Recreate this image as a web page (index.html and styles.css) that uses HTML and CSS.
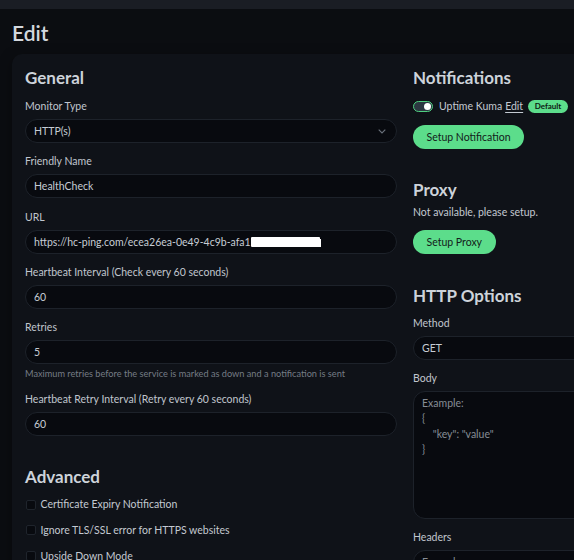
FILE: index.html
```html
<!DOCTYPE html>
<html lang="en">
<head>
<meta charset="utf-8">
<title>Edit</title>
<link rel="stylesheet" href="styles.css">
</head>
<body>
<div class="topbar"></div>
<main class="page">
  <h1 class="page-title">Edit</h1>
  <div class="card">
    <div class="col col-left">
      <h2 class="section-title">General</h2>

      <div class="field">
        <label class="label">Monitor Type</label>
        <div class="select">
          <span>HTTP(s)</span>
          <svg class="chevron" width="8" height="5" viewBox="0 0 8 5"><path d="M0.7 0.7 L4 4 L7.3 0.7" fill="none" stroke="#6b727c" stroke-width="1.1"/></svg>
        </div>
      </div>

      <div class="field">
        <label class="label">Friendly Name</label>
        <div class="input">HealthCheck</div>
      </div>

      <div class="field">
        <label class="label">URL</label>
        <div class="input input-url"><span>https://hc-ping.com/ecea26ea-0e49-4c9b-afa1</span><span class="redact"></span></div>
      </div>

      <div class="field">
        <label class="label">Heartbeat Interval (Check every 60 seconds)</label>
        <div class="input">60</div>
      </div>

      <div class="field field-help">
        <label class="label">Retries</label>
        <div class="input">5</div>
        <div class="help">Maximum retries before the service is marked as down and a notification is sent</div>
      </div>

      <div class="field">
        <label class="label">Heartbeat Retry Interval (Retry every 60 seconds)</label>
        <div class="input">60</div>
      </div>

      <h2 class="section-title advanced">Advanced</h2>
      <div class="check"><span class="box"></span><span>Certificate Expiry Notification</span></div>
      <div class="check"><span class="box"></span><span>Ignore TLS/SSL error for HTTPS websites</span></div>
      <div class="check"><span class="box"></span><span>Upside Down Mode</span></div>
    </div>

    <div class="col col-right">
      <h2 class="section-title">Notifications</h2>
      <div class="notif-row">
        <span class="switch"><span class="knob"></span></span>
        <span class="notif-name">Uptime Kuma</span>
        <a class="notif-edit">Edit</a>
        <span class="badge">Default</span>
      </div>
      <button class="btn btn-notif">Setup Notification</button>

      <h2 class="section-title proxy">Proxy</h2>
      <p class="note">Not available, please setup.</p>
      <button class="btn btn-proxy">Setup Proxy</button>

      <h2 class="section-title http">HTTP Options</h2>
      <div class="field">
        <label class="label">Method</label>
        <div class="select"><span>GET</span></div>
      </div>
      <div class="field">
        <label class="label">Body</label>
        <div class="textarea"><span class="ph">Example:
{
    "key": "value"
}</span></div>
      </div>
      <div class="field">
        <label class="label">Headers</label>
        <div class="textarea"><span class="ph">Example:</span></div>
      </div>
    </div>
  </div>
</main>
</body>
</html>
```

FILE: styles.css
```css
* { box-sizing: border-box; }

html, body {
  margin: 0;
  padding: 0;
  background: #0b0d11;
  overflow: hidden;
}

body {
  font-family: Lato, "Noto Sans", sans-serif;
  color: #c3c9d1;
  font-size: 10.5px;
  width: 574px;
  height: 560px;
}

.topbar {
  height: 9px;
  background: #1a1d24;
}

.page {
  padding: 0 12px;
}

.page-title {
  margin: 11px 0 8px 0;
  font-size: 21px;
  line-height: 26px;
  font-weight: 600;
  color: #d3d8de;
}

.card {
  display: flex;
  gap: 16px;
  width: 786px;
  background: #0f1218;
  border-radius: 10px;
  padding: 13px 13px 40px 13px;
  box-shadow: 0 4px 14px rgba(0, 0, 0, 0.35);
}

.col {
  width: 372px;
  flex: none;
}

.section-title {
  margin: 0 0 10px 0;
  font-size: 17px;
  line-height: 22px;
  font-weight: 700;
  color: #cdd3da;
}

.section-title.advanced { margin-top: 30px; margin-bottom: 9.5px; }
.section-title.proxy { margin-top: 30px; margin-bottom: 4px; }
.section-title.http { margin-top: 31.4px; margin-bottom: 8.7px; }

.field {
  margin-bottom: 11.3px;
}

.field-help { margin-bottom: 10.5px; }

.label {
  display: block;
  line-height: 15px;
  margin-bottom: 5px;
  color: #c0c6ce;
}

.input, .select, .textarea {
  height: 24px;
  border: 1px solid #1d222a;
  background: #080a0f;
  border-radius: 12px;
  padding: 0 8px;
  display: flex;
  align-items: center;
  color: #c6ccd4;
  white-space: nowrap;
}

.select {
  justify-content: space-between;
  padding-right: 10px;
}

.chevron { display: block; }

.redact {
  display: inline-block;
  width: 69px;
  height: 10px;
  margin-left: 0;
  margin-top: 1px;
  background: #ffffff;
  border-radius: 1px;
  box-shadow: 2px 1px 0 -1px #ffffff;
}

.help {
  margin-top: 3px;
  font-size: 9.2px;
  line-height: 14px;
  color: #757c85;
}

.check {
  display: flex;
  align-items: center;
  gap: 5px;
  line-height: 15px;
  margin-bottom: 10.7px;
  color: #c3c9d1;
}

.box {
  width: 10px;
  height: 10px;
  border: 1px solid #1f242c;
  background: #080a0f;
  border-radius: 2px;
  flex: none;
  margin-left: 0.5px;
}

.notif-row {
  display: flex;
  align-items: center;
  height: 15px;
  line-height: 15px;
}

.switch {
  width: 20px;
  height: 11px;
  border: 1px solid #4fcf80;
  background: #2c3741;
  border-radius: 6px;
  position: relative;
  margin-right: 6px;
  flex: none;
}

.knob {
  position: absolute;
  right: 1.5px;
  top: 1px;
  width: 7px;
  height: 7px;
  border-radius: 50%;
  background: #ffffff;
}

.notif-name { color: #c3c9d1; margin-right: 3px; }

.notif-edit {
  color: #c3c9d1;
  text-decoration: underline;
  text-underline-offset: 1.5px;
  margin-right: 5px;
}

.badge {
  display: inline-flex;
  align-items: center;
  justify-content: center;
  height: 13.5px;
  padding: 0 6.5px;
  border-radius: 7px;
  background: #5cdd8b;
  color: #0d1a12;
  font-size: 8px;
  font-weight: 700;
}

.btn {
  display: block;
  height: 24px;
  border: none;
  border-radius: 12px;
  background: #5cdd8b;
  color: #13201a;
  font-family: inherit;
  font-size: 10.5px;
  padding: 0 13.5px;
  margin-top: 10.6px;
}

.note {
  margin: 0;
  line-height: 15px;
  color: #c3c9d1;
}

.btn-proxy { margin-top: 10px; }

.textarea {
  height: 128px;
  align-items: flex-start;
  border-radius: 12px;
  padding: 4px 8px;
  white-space: pre;
  line-height: 15.4px;
}

.ph { color: #868d96; }
```
